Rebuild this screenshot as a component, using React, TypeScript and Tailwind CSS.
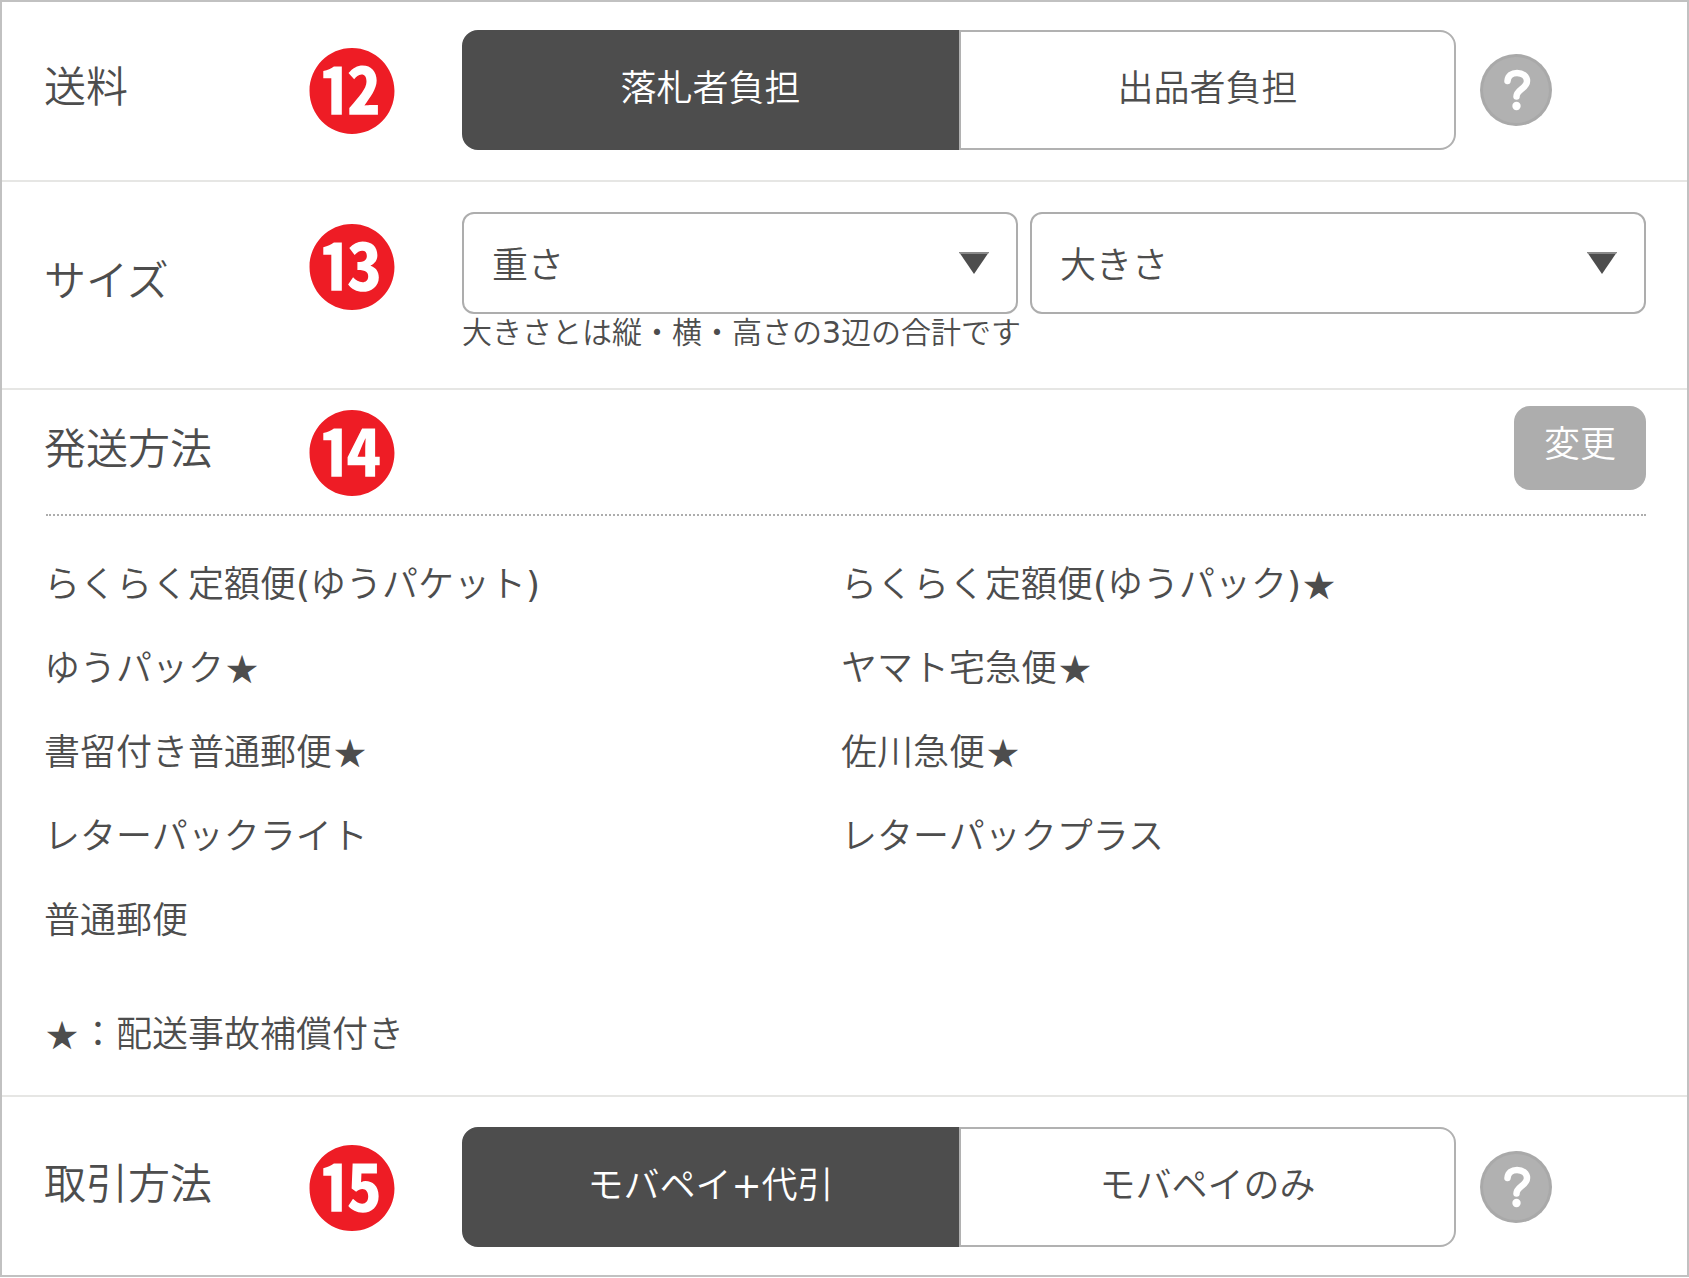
import { useState } from "react";

const shippingMethods = [
  { name: "らくらく定額便(ゆうパケット)", insured: false },
  { name: "らくらく定額便(ゆうパック)", insured: true },
  { name: "ゆうパック", insured: true },
  { name: "ヤマト宅急便", insured: true },
  { name: "書留付き普通郵便", insured: true },
  { name: "佐川急便", insured: true },
  { name: "レターパックライト", insured: false },
  { name: "レターパックプラス", insured: false },
  { name: "普通郵便", insured: false },
];

const Star = () => (
  <span className="inline-block w-9 text-center text-[32px] leading-none">
    ★
  </span>
);

// latin characters need a heavier weight to sit evenly beside the kana
const MixedText = ({ text }: { text: string }) => (
  <>
    {text.split(/([()+\d])/).map((part, i) =>
      i % 2 ? (
        <span key={i} className="font-normal">
          {part}
        </span>
      ) : (
        part
      )
    )}
  </>
);

const RowHead = ({
  label,
  badge,
  labelClass = "",
}: {
  label: string;
  badge: string;
  labelClass?: string;
}) => (
  <div className="flex w-[418px] shrink-0 items-center">
    <h2 className={`w-[265px] pt-1 text-[42px] leading-[60px] ${labelClass}`}>
      {label}
    </h2>
    <span className="flex h-[84px] w-[86px] shrink-0 items-center justify-center font-['Noto_Sans_CJK_JP',sans-serif] text-[90px] leading-none font-bold text-[#ee1c25]">
      {badge}
    </span>
  </div>
);

const HelpButton = () => (
  <button type="button" aria-label="ヘルプ" className="mr-[135px] shrink-0">
    <svg viewBox="0 0 72 72" className="h-[72px] w-[72px]" fill="none">
      <circle cx="36" cy="36" r="36" fill="#a9a9a9" />
      <circle cx="36" cy="36" r="33" fill="#b1b1b1" />
      <path
        d="M27.500 27C28 21.500 32 19 37 19C43 19 47 22.500 47 27C47 34.500 36.500 35.500 36.500 42.500"
        stroke="#fff"
        strokeWidth="6.500"
        strokeLinecap="round"
      />
      <circle cx="36.500" cy="52" r="4.200" fill="#fff" />
    </svg>
  </button>
);

const Segmented = ({ options }: { options: string[] }) => {
  const [selected, setSelected] = useState(0);

  return (
    <div className="flex h-[120px] flex-1">
      {options.map((option, i) => (
        <button
          key={option}
          type="button"
          aria-pressed={selected === i}
          onClick={() => setSelected(i)}
          className="flex-1 border-2 border-[#b1b1b1] pb-0.5 text-4xl first:rounded-l-2xl last:rounded-r-2xl aria-pressed:border-[#4d4d4d] aria-pressed:bg-[#4d4d4d] aria-pressed:text-white"
        >
          <MixedText text={option} />
        </button>
      ))}
    </div>
  );
};

const SelectBox = ({ label }: { label: string }) => (
  <div className="relative">
    <select
      aria-label={label}
      className="h-[102px] w-full appearance-none rounded-xl border-2 border-[#adadad] bg-white pt-1.5 pl-7 text-4xl"
    >
      <option>{label}</option>
    </select>
    <svg
      viewBox="0 0 30 22"
      className="pointer-events-none absolute top-10 right-[29px] h-[22px] w-[30px]"
    >
      <path d="M0 0H30L15 22Z" fill="#4d4d4d" />
      <path d="M0 0H30L29 2H1Z" fill="#8a8a8a" />
    </svg>
  </div>
);

const App = () => {
  return (
    <main className="border-2 border-[#c1c1c1] bg-white font-['DejaVu_Sans','Noto_Sans_CJK_JP',sans-serif] font-[350] text-[#4d4d4d]">
      <section className="flex items-center border-b-2 border-[#e6e6e4] pt-7 pb-[30px] pl-[42px]">
        <div className="pb-2">
          <RowHead label="送料" badge="⓬" />
        </div>
        <div className="flex flex-1 items-center gap-6">
          <Segmented options={["落札者負担", "出品者負担"]} />
          <HelpButton />
        </div>
      </section>

      <section className="flex items-start border-b-2 border-[#e6e6e4] pt-[30px] pr-[41px] pb-8 pl-[42px]">
        <RowHead label="サイズ" badge="⓭" labelClass="mt-9" />
        <div className="flex-1">
          <div className="grid grid-cols-[556fr_616fr] gap-3">
            <SelectBox label="重さ" />
            <SelectBox label="大きさ" />
          </div>
          <p className="h-[42px] text-3xl leading-[38px]">
            <MixedText text="大きさとは縦・横・高さの3辺の合計です" />
          </p>
        </div>
      </section>

      <section className="border-b-2 border-[#e6e6e4] pr-[41px] pl-[42px]">
        <div className="flex items-center justify-between pt-4 pb-6">
          <RowHead label="発送方法" badge="⓮" />
          <button
            type="button"
            className="h-[84px] w-[132px] rounded-2xl bg-[#adadad] pb-1.5 text-4xl text-white"
          >
            変更
          </button>
        </div>
        <hr className="ml-0.5 border-t-2 border-dotted border-[#adadad]" />
        <ul className="grid grid-cols-2 pt-[27px] pr-2 text-4xl leading-[84px]">
          {shippingMethods.map((method) => (
            <li key={method.name}>
              <MixedText text={method.name} />
              {method.insured && <Star />}
            </li>
          ))}
        </ul>
        <p className="pt-[30px] pb-[18px] text-4xl leading-[84px]">
          <Star />
          ：配送事故補償付き
        </p>
      </section>

      <section className="flex items-center pt-[30px] pb-7 pl-[42px]">
        <div className="pb-2">
          <RowHead label="取引方法" badge="⓯" />
        </div>
        <div className="flex flex-1 items-center gap-6">
          <Segmented options={["モバペイ+代引", "モバペイのみ"]} />
          <HelpButton />
        </div>
      </section>
    </main>
  );
};

export default App;
